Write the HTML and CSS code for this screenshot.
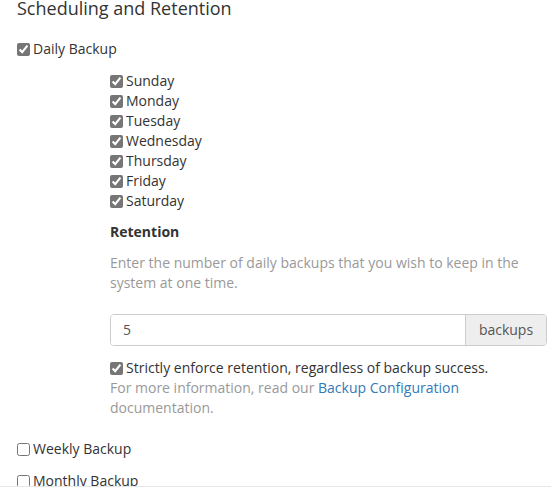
FILE: index.html
```html
<!DOCTYPE html>
<html>
<head>
<meta charset="utf-8">
<link rel="stylesheet" href="styles.css">
</head>
<body>
<div class="page">
  <h2 class="title">Scheduling and Retention</h2>
  <label class="check top-check daily"><input type="checkbox" class="cb cb-on" checked>Daily Backup</label>
  <div class="sub">
    <div class="days">
      <label class="check"><input type="checkbox" class="cb cb-on" checked>Sunday</label>
      <label class="check"><input type="checkbox" class="cb cb-on" checked>Monday</label>
      <label class="check"><input type="checkbox" class="cb cb-on" checked>Tuesday</label>
      <label class="check"><input type="checkbox" class="cb cb-on" checked>Wednesday</label>
      <label class="check"><input type="checkbox" class="cb cb-on" checked>Thursday</label>
      <label class="check"><input type="checkbox" class="cb cb-on" checked>Friday</label>
      <label class="check"><input type="checkbox" class="cb cb-on" checked>Saturday</label>
    </div>
    <div class="ret-title">Retention</div>
    <p class="help">Enter the number of daily backups that you wish to keep in the system at one time.</p>
    <div class="input-group">
      <input class="field" type="text" value="5">
      <span class="addon">backups</span>
    </div>
    <label class="check strict"><input type="checkbox" class="cb cb-on" checked>Strictly enforce retention, regardless of backup success.</label>
    <p class="help info">For more information, read our <a href="#" class="link">Backup Configuration</a> documentation.</p>
  </div>
  <label class="check top-check weekly"><input type="checkbox" class="cb">Weekly Backup</label>
  <label class="check top-check monthly"><input type="checkbox" class="cb">Monthly Backup</label>
</div>
<div class="footer-edge"></div>
</body>
</html>
```
FILE: styles.css
```css
html, body {
  margin: 0;
  padding: 0;
  background: #fff;
}
body {
  font-family: "Open Sans", "Liberation Sans", sans-serif;
  font-size: 14px;
  line-height: 20px;
  color: #333;
}
.page {
  padding: 0 4px 0 17px;
  display: flex;
  flex-direction: column;
  align-items: flex-start;
}
.title {
  margin: 0;
  font-size: 18px;
  font-weight: 400;
  line-height: 16px;
  color: #333;
}
.check {
  display: flex;
  align-items: center;
  height: 20px;
  cursor: default;
}
.cb {
  width: 13px;
  height: 13px;
  margin: 0 3px 0 0;
  flex: none;
  accent-color: #767676;
}
.daily {
  margin-top: 23px;
}
.sub {
  align-self: stretch;
  margin: 12px 0 0 93px;
}
.days {
  display: flex;
  flex-direction: column;
}
.ret-title {
  margin-top: 11px;
  font-weight: 700;
}
.help {
  margin: 11px 0 0;
  color: #999;
}
.input-group {
  margin-top: 21px;
  display: flex;
  height: 32px;
  box-sizing: border-box;
  border: 1px solid #ccc;
  border-radius: 4px;
  overflow: hidden;
}
.field {
  flex: 1;
  min-width: 0;
  border: 0;
  padding: 0 12px;
  font: inherit;
  color: #555;
  outline: none;
  background: #fff;
}
.addon {
  width: 80px;
  flex: none;
  display: flex;
  align-items: center;
  justify-content: center;
  background: #eee;
  border-left: 1px solid #ccc;
  color: #555;
}
.strict {
  margin-top: 12px;
}
.info {
  margin-top: 0;
}
.link {
  color: #337ab7;
  text-decoration: none;
}
.weekly {
  margin-top: 21px;
}
.monthly {
  margin-top: 12px;
}
.footer-edge {
  position: fixed;
  left: 0;
  right: 0;
  top: 486px;
  height: 2px;
  background: #fff;
  border-top: 1px solid #e6e6e6;
}
```
